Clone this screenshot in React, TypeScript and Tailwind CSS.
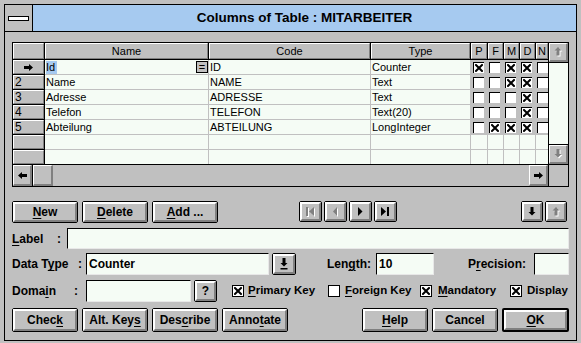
import React from 'react';

const FONT = "font-['Liberation_Sans',Arial,sans-serif]";
const BEVEL =
  'border-t border-l border-t-white border-l-white border-r-2 border-b-2 border-r-[#808080] border-b-[#808080]';
const BEVEL1 =
  'border-t border-l border-t-white border-l-white border-r border-b border-r-[#808080] border-b-[#808080]';

function U({ children }: { children: React.ReactNode }) {
  return <span className="underline decoration-1 underline-offset-[2px]">{children}</span>;
}

function XMark({ s = 8 }: { s?: number }) {
  return (
    <svg width={s} height={s} viewBox="0 0 8 8">
      <path d="M1 1L7 7M7 1L1 7" stroke="black" strokeWidth="2" strokeLinecap="square" />
    </svg>
  );
}

function ArrowRight({ color = 'black' }: { color?: string }) {
  return (
    <svg width="9" height="7" viewBox="0 0 9 7">
      <path d="M0 2h5V0l4 3.5L5 7V5H0z" fill={color} />
    </svg>
  );
}
function ArrowLeft({ color = 'black' }: { color?: string }) {
  return (
    <svg width="9" height="7" viewBox="0 0 9 7">
      <path d="M9 2H4V0L0 3.5 4 7V5h5z" fill={color} />
    </svg>
  );
}
function ArrowDown({ disabled = false, bar = false }: { disabled?: boolean; bar?: boolean }) {
  return (
    <svg width="9" height={bar ? 12 : 10} viewBox={bar ? '0 0 9 12' : '0 0 9 10'}>
      {disabled && <path d="M3.5 1h3v5h2L5 9.5 1.5 6h2z" fill="white" />}
      <path d="M2.5 0h3v5h2L4 8.5 0.5 5h2z" fill={disabled ? '#808080' : 'black'} />
      {bar && <rect x="0.5" y="10" width="7" height="1.5" fill="black" />}
    </svg>
  );
}
function ArrowUp({ disabled = false }: { disabled?: boolean }) {
  return (
    <svg width="9" height="10" viewBox="0 0 9 10">
      {disabled && <path d="M3.5 9.5h3v-5h2L5 1 1.5 4.5h2z" fill="white" />}
      <path d="M2.5 8.5h3v-5h2L4 0 0.5 3.5h2z" fill={disabled ? '#808080' : 'black'} />
    </svg>
  );
}
function NavIcon({ kind, disabled = false }: { kind: 'first' | 'prev' | 'next' | 'last'; disabled?: boolean }) {
  const c = disabled ? '#808080' : 'black';
  const shapes = (dx: number, fill: string) => {
    switch (kind) {
      case 'first':
        return (
          <g transform={`translate(${dx},${dx})`} fill={fill}>
            <rect x="0" y="0" width="2" height="9" />
            <path d="M8 0v9L3 4.5z" />
          </g>
        );
      case 'prev':
        return (
          <g transform={`translate(${dx},${dx})`} fill={fill}>
            <path d="M6 0v9L2 4.5z" />
          </g>
        );
      case 'next':
        return (
          <g transform={`translate(${dx},${dx})`} fill={fill}>
            <path d="M2 0v9l4.5-4.5z" />
          </g>
        );
      default:
        return (
          <g transform={`translate(${dx},${dx})`} fill={fill}>
            <path d="M0 0v9l5-4.5z" />
            <rect x="6" y="0" width="2" height="9" />
          </g>
        );
    }
  };
  return (
    <svg width="9" height="10" viewBox="0 0 9 10">
      {disabled && shapes(1, 'white')}
      {shapes(0, c)}
    </svg>
  );
}

function PushButton({
  children,
  className = '',
  def = false,
}: {
  children: React.ReactNode;
  className?: string;
  def?: boolean;
}) {
  return (
    <div
      className={`${className} shrink-0 ${def ? 'border-2' : 'border'} border-black rounded-[2px] bg-[#c0c0c0] flex`}
    >
      <div
        className={`flex-1 flex items-center justify-center ${BEVEL} border-t-2 border-l-2 text-[12px] font-bold leading-none text-black whitespace-nowrap`}
      >
        {children}
      </div>
    </div>
  );
}

function Input({ className = '', children }: { className?: string; children?: React.ReactNode }) {
  return (
    <div
      className={`${className} shrink-0 bg-[#f5fcf5] border border-t-black border-l-black border-r-[#e8e8e8] border-b-[#e8e8e8] flex items-center pl-[2px] text-[12px] font-bold leading-none`}
    >
      {children}
    </div>
  );
}

function CheckBox({ checked }: { checked: boolean }) {
  return (
    <div className="w-[12px] h-[12px] border border-black bg-white flex items-center justify-center shrink-0">
      {checked && <XMark s={8} />}
    </div>
  );
}

function GridCheck({ checked }: { checked: boolean }) {
  return (
    <div className="w-[11px] h-[11px] shrink-0 bg-white border-t border-l border-black flex items-center justify-center">
      {checked && <XMark s={8} />}
    </div>
  );
}

type Row = {
  sel: string;
  name: string;
  code: string;
  type: string;
  p: boolean;
  f: boolean;
  m: boolean;
  d: boolean;
};

const rows: Row[] = [
  { sel: '>', name: 'Id', code: 'ID', type: 'Counter', p: true, f: false, m: true, d: true },
  { sel: '2', name: 'Name', code: 'NAME', type: 'Text', p: false, f: false, m: true, d: true },
  { sel: '3', name: 'Adresse', code: 'ADRESSE', type: 'Text', p: false, f: false, m: false, d: true },
  { sel: '4', name: 'Telefon', code: 'TELEFON', type: 'Text(20)', p: false, f: false, m: false, d: true },
  { sel: '5', name: 'Abteilung', code: 'ABTEILUNG', type: 'LongInteger', p: false, f: true, m: true, d: true },
];

const TXT = 'text-[11px] leading-none text-black whitespace-nowrap';
const DCELL = 'shrink-0 border-r border-[#c0c0c0] bg-[#f5fcf5] flex items-center pl-[1px] overflow-hidden';

function HeaderRow() {
  const H = ({ w, children, last = false }: { w: string; children?: React.ReactNode; last?: boolean }) => (
    <div className={`${w} shrink-0 h-full flex ${last ? '' : 'border-r border-black'}`}>
      <div className={`flex-1 ${BEVEL1} flex items-center justify-center ${TXT} bg-[#c0c0c0] overflow-hidden`}>
        {children}
      </div>
    </div>
  );
  return (
    <div className="flex h-[17px] border-b border-black shrink-0">
      <H w="w-[32px]" />
      <H w="w-[164px]">Name</H>
      <H w="w-[162px]">Code</H>
      <H w="w-[100px]">Type</H>
      <H w="w-[17px]">P</H>
      <H w="w-[16px]">F</H>
      <H w="w-[16px]">M</H>
      <H w="w-[16px]">D</H>
      <H w="w-[12px]" last>
        N
      </H>
    </div>
  );
}

function DataRow({ row, last = false, index }: { row?: Row; last?: boolean; index: number }) {
  const bb = last ? '' : 'border-b';
  const h = last ? 'h-[14px]' : 'h-[15px]';
  const chk = row ? 'bg-[#c0c0c0]' : 'bg-[#f5fcf5]';
  const CC = ({ w, ml, v }: { w: string; ml: string; v?: boolean }) => (
    <div className={`${w} shrink-0 ${bb} border-r border-[#c0c0c0] ${chk} flex items-center ${ml} overflow-hidden`}>
      {row && <GridCheck checked={!!v} />}
    </div>
  );
  return (
    <div className={`flex ${h} shrink-0`}>
      <div className={`w-[32px] shrink-0 flex border-r ${bb} border-black`}>
        <div className={`flex-1 ${BEVEL1} bg-[#c0c0c0] flex items-center ${TXT} text-[12px]`}>
          {row &&
            (row.sel === '>' ? (
              <div className="flex-1 flex justify-center">
                <ArrowRight />
              </div>
            ) : (
              <span className="pl-[1px]">{row.sel}</span>
            ))}
        </div>
      </div>
      <div className={`w-[164px] ${DCELL} ${bb} ${TXT}`}>
        {row &&
          (index === 0 ? (
            <>
              <span className="bg-[#a6caf0] h-[13px] flex items-center pr-[2px]">{row.name}</span>
              <div className="ml-auto w-[12px] h-[12px] border border-black bg-[#c0c0c0] flex items-center justify-center text-[11px] leading-none">
                =
              </div>
            </>
          ) : (
            row.name
          ))}
      </div>
      <div className={`w-[162px] ${DCELL} ${bb} ${TXT}`}>{row?.code}</div>
      <div className={`w-[100px] ${DCELL} ${bb} ${TXT}`}>{row?.type}</div>
      <CC w="w-[17px]" ml="pl-[2px]" v={row?.p} />
      <CC w="w-[16px]" ml="pl-[1px]" v={row?.f} />
      <CC w="w-[16px]" ml="pl-[1px]" v={row?.m} />
      <CC w="w-[16px]" ml="pl-[1px]" v={row?.d} />
      <div className={`w-[12px] shrink-0 ${bb} border-[#c0c0c0] ${chk} flex items-center pl-[1px] overflow-hidden`}>
        {row && <GridCheck checked={false} />}
      </div>
    </div>
  );
}

function Grid() {
  return (
    <div className="w-[557px] h-[145px] shrink-0 border border-black flex flex-col bg-[#c0c0c0]">
      <div className="flex h-[121px] shrink-0">
        <div className="w-[535px] shrink-0 flex flex-col">
          <HeaderRow />
          {rows.map((r, i) => (
            <DataRow key={i} row={r} index={i} />
          ))}
          <DataRow index={5} />
          <DataRow index={6} last />
        </div>
        <div className="w-[20px] shrink-0 border-l border-black flex flex-col bg-[#f5fcf5]">
          <div className="h-[20px] shrink-0 border-b border-black flex bg-[#c0c0c0]">
            <div className={`flex-1 ${BEVEL} flex items-center justify-center`}>
              <ArrowUp disabled />
            </div>
          </div>
          <div className="flex-1" />
          <div className="h-[20px] shrink-0 border-t border-black flex bg-[#c0c0c0]">
            <div className={`flex-1 ${BEVEL} flex items-center justify-center`}>
              <ArrowDown disabled />
            </div>
          </div>
        </div>
      </div>
      <div className="flex h-[22px] shrink-0 border-t border-black bg-[#c0c0c0]">
        <div className="w-[20px] shrink-0 border-r border-black flex">
          <div className={`flex-1 ${BEVEL} flex items-center justify-center`}>
            <ArrowLeft />
          </div>
        </div>
        <div className={`w-[20px] shrink-0 ${BEVEL}`} />
        <div className="flex-1" />
        <div className={`w-[19px] shrink-0 ${BEVEL} flex items-center justify-center`}>
          <ArrowRight />
        </div>
        <div className="w-[20px] shrink-0 border-l border-black" />
      </div>
    </div>
  );
}

export default function App() {
  return (
    <div className={`w-[581px] h-[343px] bg-[#c0c0c0] pt-[4px] px-[4px] pb-[2px] ${FONT} text-black`}>
      <div className="w-full h-full border border-black flex flex-col">
        {/* Title bar */}
        <div className="flex h-[27px] shrink-0 border-b border-black">
          <div className="w-[28px] shrink-0 border-r border-black bg-[#c0c0c0] flex items-center justify-center">
            <div className="w-[21px] h-[5px] border border-black bg-white" />
          </div>
          <div className="flex-1 bg-[#a6caf0] flex items-center justify-center text-[13.5px] font-bold leading-none">
            Columns of Table : MITARBEITER
          </div>
        </div>

        <div className="flex-1 flex flex-col px-[7px] pt-[10px]">
          <Grid />

          {/* Button row */}
          <div className="flex h-[22px] mt-[14px] items-start shrink-0">
            <PushButton className="w-[66px] h-[22px]">
              <U>N</U>ew
            </PushButton>
            <PushButton className="w-[66px] h-[22px] ml-[4px]">
              <U>D</U>elete
            </PushButton>
            <PushButton className="w-[66px] h-[22px] ml-[4px]">
              <U>A</U>dd ...
            </PushButton>
            <div className="flex ml-[81px] gap-[2px]">
              <PushButton className="w-[23px] h-[21px]">
                <NavIcon kind="first" disabled />
              </PushButton>
              <PushButton className="w-[23px] h-[21px]">
                <NavIcon kind="prev" disabled />
              </PushButton>
              <PushButton className="w-[23px] h-[21px]">
                <NavIcon kind="next" />
              </PushButton>
              <PushButton className="w-[23px] h-[21px]">
                <NavIcon kind="last" />
              </PushButton>
            </div>
            <div className="flex ml-auto mr-[2px] gap-[2px]">
              <PushButton className="w-[22px] h-[21px]">
                <ArrowDown />
              </PushButton>
              <PushButton className="w-[22px] h-[21px]">
                <ArrowUp disabled />
              </PushButton>
            </div>
          </div>

          {/* Label */}
          <div className="flex h-[21px] mt-[5px] items-center shrink-0 text-[12px] font-bold leading-none">
            <div className="w-[55px] shrink-0 flex pr-[6px]">
              <span>
                <U>L</U>abel
              </span>
              <span className="ml-auto">:</span>
            </div>
            <Input className="flex-1 h-[21px]" />
          </div>

          {/* Data Type */}
          <div className="flex h-[22px] mt-[4px] items-center shrink-0 text-[12px] font-bold leading-none">
            <div className="w-[74px] shrink-0 flex pr-[4px]">
              <span>
                Data T<U>y</U>pe
              </span>
              <span className="ml-auto">:</span>
            </div>
            <Input className="w-[183px] h-[22px]">Counter</Input>
            <PushButton className="w-[24px] h-[22px] ml-[3px]">
              <ArrowDown bar />
            </PushButton>
            <div className="w-[80px] shrink-0 flex justify-end pr-[5px]">
              <span>
                Len<U>g</U>th:
              </span>
            </div>
            <Input className="w-[58px] h-[22px]">10</Input>
            <div className="w-[100px] shrink-0 flex justify-end pr-[8px]">
              <span>
                P<U>r</U>ecision:
              </span>
            </div>
            <Input className="flex-1 h-[22px]" />
          </div>

          {/* Domain */}
          <div className="flex h-[22px] mt-[5px] items-center shrink-0 text-[11.5px] font-bold leading-none">
            <div className="w-[74px] shrink-0 flex pr-[8px] text-[12px]">
              <span>
                Doma<U>i</U>n
              </span>
              <span className="ml-auto">:</span>
            </div>
            <Input className="w-[105px] h-[22px]" />
            <PushButton className="w-[23px] h-[22px] ml-[3px]">?</PushButton>
            <div className="w-[96px] shrink-0 flex items-center gap-[4px] ml-[15px]">
              <CheckBox checked />
              <span>
                <U>P</U>rimary Key
              </span>
            </div>
            <div className="w-[92px] shrink-0 flex items-center gap-[5px]">
              <CheckBox checked={false} />
              <span>
                <U>F</U>oreign Key
              </span>
            </div>
            <div className="w-[90px] shrink-0 flex items-center gap-[6px]">
              <CheckBox checked />
              <span>
                <U>M</U>andatory
              </span>
            </div>
            <div className="flex items-center gap-[5px]">
              <CheckBox checked />
              <span>Display</span>
            </div>
          </div>

          {/* Bottom buttons */}
          <div className="flex h-[24px] mt-[6px] shrink-0">
            <PushButton className="w-[66px] h-[24px]">
              Chec<U>k</U>
            </PushButton>
            <PushButton className="w-[66px] h-[24px] ml-[4px]">
              Alt. Key<U>s</U>
            </PushButton>
            <PushButton className="w-[66px] h-[24px] ml-[4px]">
              Des<U>c</U>ribe
            </PushButton>
            <PushButton className="w-[66px] h-[24px] ml-[4px]">
              Anno<U>t</U>ate
            </PushButton>
            <PushButton className="w-[66px] h-[24px] ml-auto">
              <U>H</U>elp
            </PushButton>
            <PushButton className="w-[66px] h-[24px] ml-[4px]">Cancel</PushButton>
            <PushButton className="w-[67px] h-[24px] ml-[4px]" def>
              <U>O</U>K
            </PushButton>
          </div>
        </div>
      </div>
    </div>
  );
}
